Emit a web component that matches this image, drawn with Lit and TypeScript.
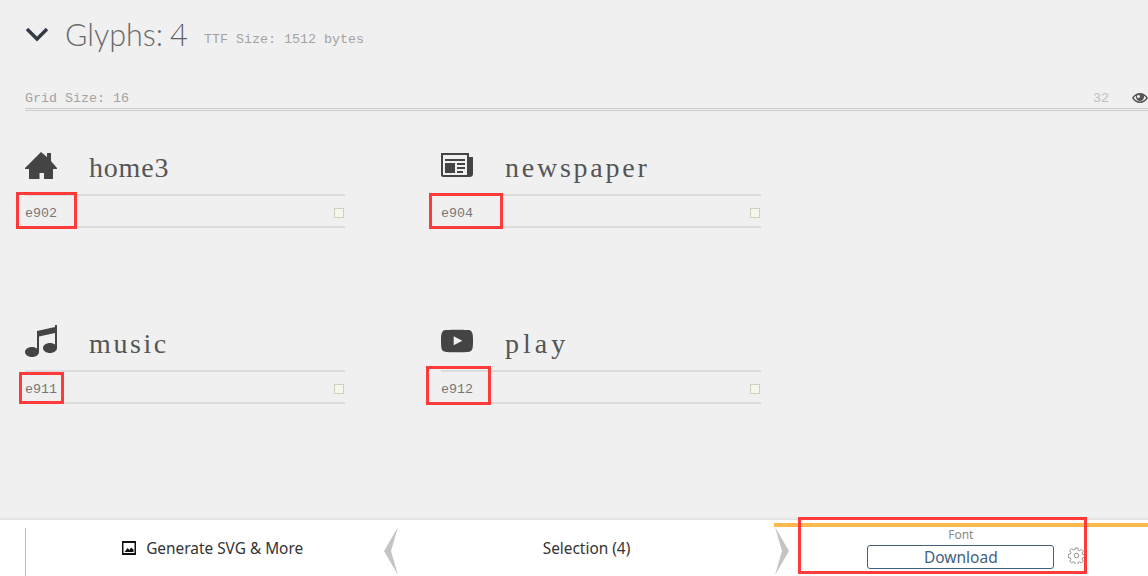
import { LitElement, css, html, svg } from "lit";
import { customElement } from "lit/decorators.js";

// icon paths on a 32 unit grid
const HOME = svg`<path d="M16 3l6 5V4h4v8l6 7v1h-4v10h-9v-6h-4.500v6H4V20H0v-1z"/>`;
const NEWSPAPER = svg`<path d="M28 8v-4h-28v22c0 1.105 0.895 2 2 2h27c1.657 0 3-1.343 3-3v-17h-4zM26 26h-24v-20h24v20zM4 10h20v2h-20zM16 14h8v2h-8zM16 18h8v2h-8zM16 22h6v2h-6zM4 14h10v10h-10z"/>`;
const MUSIC = svg`<path d="M30 0h2v23c0 2.761-3.134 5-7 5s-7-2.239-7-5c0-2.761 3.134-5 7-5 1.959 0 3.729 0.575 5 1.501v-11.501l-16 3.556v15.444c0 2.761-3.134 5-7 5s-7-2.239-7-5c0-2.761 3.134-5 7-5 1.959 0 3.729 0.575 5 1.501v-17.501l18-4z"/>`;
const PLAY = svg`<path d="M31.681 9.6c0 0-0.313-2.206-1.275-3.175-1.219-1.275-2.581-1.281-3.206-1.356-4.475-0.325-11.194-0.325-11.194-0.325h-0.012c0 0-6.719 0-11.194 0.325-0.625 0.075-1.987 0.081-3.206 1.356-0.963 0.969-1.269 3.175-1.269 3.175s-0.319 2.588-0.319 5.181v2.425c0 2.587 0.319 5.181 0.319 5.181s0.313 2.206 1.269 3.175c1.219 1.275 2.819 1.231 3.531 1.369 2.563 0.244 10.881 0.319 10.881 0.319s6.725-0.012 11.2-0.331c0.625-0.075 1.988-0.081 3.206-1.356 0.962-0.969 1.275-3.175 1.275-3.175s0.319-2.587 0.319-5.181v-2.425c-0.006-2.588-0.325-5.181-0.325-5.181zM12.694 20.15v-8.994l8.644 4.513-8.644 4.481z"/>`;
const IMAGE = svg`<path fill-rule="evenodd" d="M2 2h28v28H2zM5 6v20h22V6zM7 24l6-8 4 4 3-5 5 4v5z"/>`;
const EYE = svg`<path d="M16 6c-6.979 0-13.028 4.064-16 10 2.972 5.936 9.021 10 16 10s13.027-4.064 16-10c-2.972-5.936-9.021-10-16-10zM23.889 11.303c1.88 1.199 3.473 2.805 4.67 4.697-1.197 1.891-2.79 3.498-4.67 4.697-2.362 1.507-5.090 2.303-7.889 2.303s-5.527-0.796-7.889-2.303c-1.88-1.199-3.473-2.805-4.67-4.697 1.197-1.891 2.79-3.498 4.67-4.697 0.122-0.078 0.246-0.154 0.371-0.228-0.311 0.854-0.482 1.776-0.482 2.737 0 4.418 3.582 8 8 8s8-3.582 8-8c0-0.962-0.17-1.883-0.482-2.737 0.124 0.074 0.248 0.15 0.371 0.228v0zM16 13c0 1.657-1.343 3-3 3s-3-1.343-3-3 1.343-3 3-3 3 1.343 3 3z"/>`;

interface Glyph {
  name: string;
  code: string;
  icon: unknown;
  // the names are 16px per letter in the reference, a serif needs stretching to that
  spacing: number;
}

const GLYPHS: Glyph[] = [
  { name: "home3", code: "e902", icon: HOME, spacing: 0.8 },
  { name: "newspaper", code: "e904", icon: NEWSPAPER, spacing: 2.75 },
  { name: "music", code: "e911", icon: MUSIC, spacing: 2.6 },
  { name: "play", code: "e912", icon: PLAY, spacing: 4 },
];

// annotation rectangles drawn over the screenshot: x, y, width, height
const MARKS = [
  [16, 192, 61, 37],
  [429, 193, 74, 36],
  [19, 372, 45, 32],
  [426, 366, 65, 39],
  [798, 517, 289, 57],
];

@customElement("app-root")
export class AppRoot extends LitElement {
  static styles = css`
    :host {
      display: block;
      position: relative;
      height: 576px;
      overflow: hidden;
      background: #f0f0f0;
      font-family: "Liberation Mono", monospace;
      font-size: 13.33px;
      color: #808080;
    }
    .page {
      display: flex;
      flex-direction: column;
      height: 576px;
    }
    .main {
      flex: 1;
      min-height: 0;
    }
    .title {
      display: flex;
      align-items: baseline;
      height: 88px;
      padding-left: 25px;
      box-sizing: border-box;
      padding-top: 15px;
    }
    .chevron {
      width: 24px;
      height: 16px;
      align-self: flex-start;
      margin-top: 11px;
      margin-right: 16px;
      fill: none;
      stroke: #333c46;
      stroke-width: 3.4;
    }
    .title h1 {
      margin: 0;
      font: 300 30.5px Lato, sans-serif;
      color: #6a6a6a;
    }
    .title .count {
      margin-left: 7px;
      font: 300 31px Lato, sans-serif;
      color: #606060;
    }
    .title .size {
      position: relative;
      top: -3px;
      margin-left: 16px;
      color: #a3a3a3;
    }
    .grid-bar {
      display: flex;
      justify-content: space-between;
      align-items: center;
      height: 20px;
      margin-left: 25px;
      border-bottom: 3px double #ccc;
      color: #a3a3a3;
      font-size: 13.33px;
    }
    .grid-bar .right {
      display: flex;
      align-items: center;
      gap: 23px;
      color: #c0c0c0;
    }
    .grid-bar svg {
      width: 16px;
      height: 16px;
      fill: #555;
    }
    .glyphs {
      display: grid;
      grid-template-columns: 320px 320px;
      column-gap: 96px;
      grid-auto-rows: 176px;
      padding: 38px 0 0 25px;
    }
    .head {
      display: flex;
      align-items: flex-start;
      height: 45px;
    }
    .head svg {
      width: 32px;
      height: 32px;
      fill: #444;
      margin-right: 32px;
      flex: none;
    }
    .head span {
      font-family: "Liberation Serif", serif;
      font-size: 28px;
      color: #555;
      line-height: 38px;
    }
    .code {
      display: flex;
      justify-content: space-between;
      align-items: center;
      height: 26px;
      padding-top: 4px;
      border-top: 2px solid #dcdcdc;
      border-bottom: 2px solid #dcdcdc;
      color: #777;
    }
    .code i {
      width: 8px;
      height: 8px;
      margin-right: 1px;
      border: 1px solid #cfcfc0;
      background: #f5f5ea;
    }
    footer {
      flex: none;
      position: relative;
      display: grid;
      grid-template-columns: repeat(3, 1fr);
      height: 56px;
      padding-left: 25px;
      background: #fff;
      border-top: 1px solid #e2e2e2;
      box-shadow: 0 -1px 2px rgba(0, 0, 0, 0.05);
      font-family: "Noto Sans", sans-serif;
      font-size: 15.4px;
      color: #333;
    }
    .tab {
      display: flex;
      align-items: center;
      justify-content: center;
      gap: 9px;
    }
    .tab svg {
      width: 16px;
      height: 16px;
      fill: #111;
    }
    .rule {
      position: absolute;
      left: 25px;
      top: 8px;
      bottom: 0;
      width: 1px;
      background: #bbb;
    }
    .font {
      position: relative;
      flex-direction: column;
      gap: 0;
      padding: 0;
      justify-content: flex-start;
      border-top: 4px solid #ffb84d;
      margin-top: 3px;
    }
    .font small {
      font-size: 12px;
      line-height: 16px;
      color: #8a8a8a;
    }
    .font button {
      width: 187px;
      height: 24px;
      margin-top: 2px;
      padding: 0;
      box-sizing: border-box;
      border: 1px solid #44607f;
      border-radius: 3px;
      background: #fff;
      color: #44607f;
      font: inherit;
      font-size: 15.5px;
      line-height: 20px;
    }
    .font svg.gear {
      position: absolute;
      left: 294px;
      top: 20px;
      width: 17px;
      height: 17px;
      fill: none;
      stroke: #8a8a8a;
      stroke-width: 1;
    }
    .arrow {
      position: absolute;
      top: 7px;
      width: 16px;
      height: 48px;
      fill: #c4c4c4;
    }
    .arrow.left {
      left: 383px;
    }
    .arrow.right {
      left: 774px;
    }
    .mark {
      position: absolute;
      box-sizing: border-box;
      border: 3px solid #ff3a3a;
    }
  `;

  private _renderGlyph(glyph: Glyph) {
    return html`
      <div class="glyph">
        <div class="head">
          <svg viewBox="0 0 32 32">${glyph.icon}</svg>
          <span style="letter-spacing:${glyph.spacing}px">${glyph.name}</span>
        </div>
        <div class="code">${glyph.code}<i></i></div>
      </div>
    `;
  }

  protected render() {
    return html`
      <div class="page">
        <div class="main">
          <div class="title">
            <svg class="chevron" viewBox="0 0 24 16"><path d="M2 3l10 10 10-10" /></svg>
            <h1>Glyphs:</h1>
            <span class="count">4</span>
            <span class="size">TTF Size: 1512 bytes</span>
          </div>
          <div class="grid-bar">
            <span>Grid Size: 16</span>
            <span class="right">32 <svg viewBox="0 0 32 32">${EYE}</svg></span>
          </div>
          <div class="glyphs">${GLYPHS.map((g) => this._renderGlyph(g))}</div>
        </div>
        <footer>
          <div class="rule"></div>
          <div class="tab">
            <svg viewBox="0 0 32 32">${IMAGE}</svg>
            Generate SVG &amp; More
          </div>
          <div class="tab">Selection (4)</div>
          <div class="tab font">
            <small>Font</small>
            <button>Download</button>
            <svg class="gear" viewBox="0 0 18 18">
              <circle cx="9" cy="9" r="2.4" />
              <path
                d="M7.600 1h2.800l.4 2.200 1.500.6 1.900-1.300 2 2-1.300 1.900.6 1.500 2.200.4v2.800l-2.200.4-.6 1.500 1.300 1.900-2 2-1.900-1.300-1.500.6-.4 2.200H7.600l-.4-2.200-1.500-.6-1.900 1.300-2-2 1.300-1.900-.6-1.500-2.200-.4V7.600l2.200-.4.6-1.500-1.300-1.900 2-2 1.900 1.300 1.500-.6z"
              />
            </svg>
          </div>
          <svg class="arrow left" viewBox="0 0 16 48"><path d="M15 0L1 24l14 24-7-24z" /></svg>
          <svg class="arrow right" viewBox="0 0 16 48"><path d="M1 0l14 24L1 48l7-24z" /></svg>
        </footer>
      </div>
      ${MARKS.map(
        ([x, y, w, h]) =>
          html`<div
            class="mark"
            style="left:${x}px;top:${y}px;width:${w}px;height:${h}px"
          ></div>`,
      )}
    `;
  }
}
